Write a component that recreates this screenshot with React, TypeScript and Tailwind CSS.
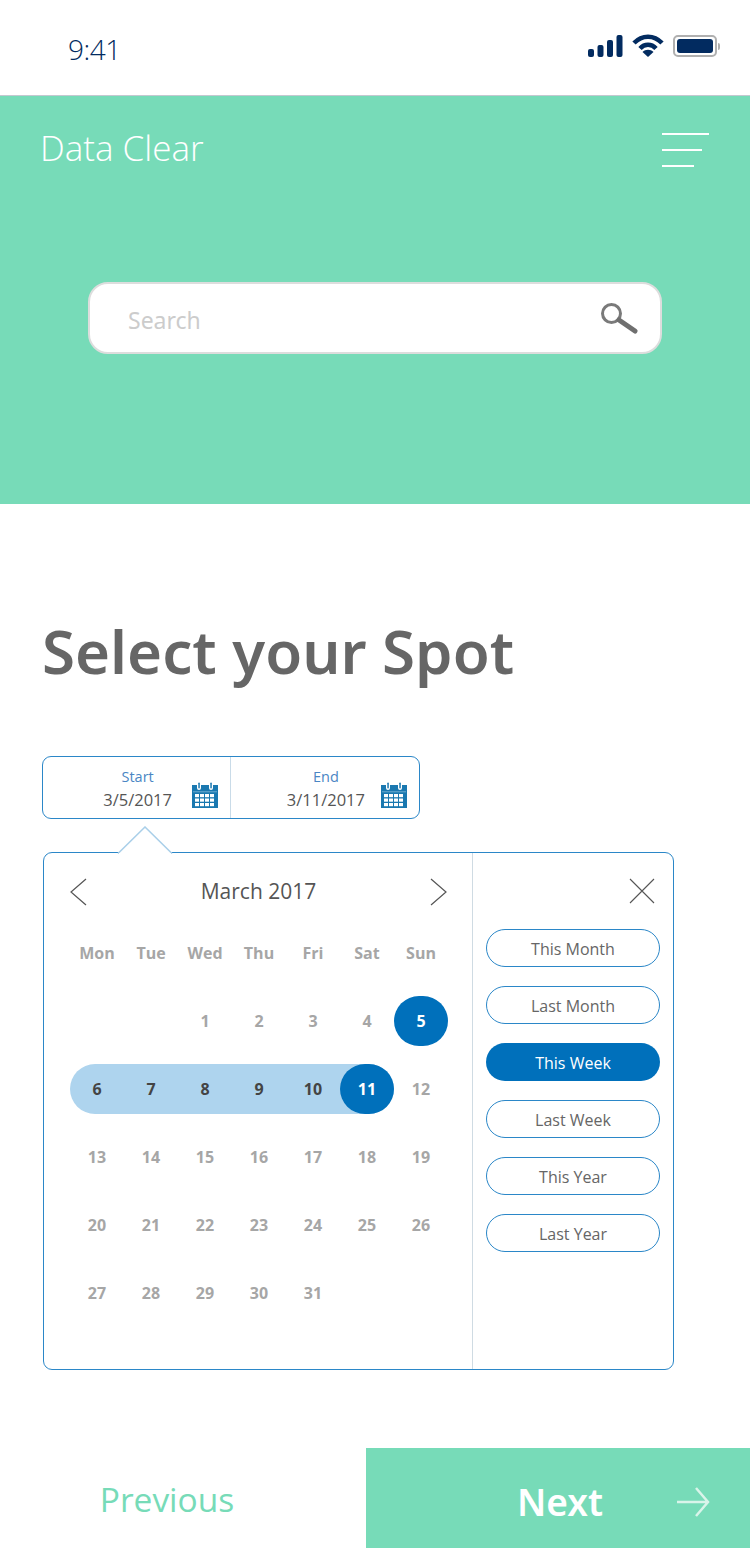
import React from "react";

const weekDays = ["Mon", "Tue", "Wed", "Thu", "Fri", "Sat", "Sun"];
const ranges = ["This Month", "Last Month", "This Week", "Last Week", "This Year", "Last Year"];
const days: (number | null)[] = [
  null, null, 1, 2, 3, 4, 5,
  6, 7, 8, 9, 10, 11, 12,
  13, 14, 15, 16, 17, 18, 19,
  20, 21, 22, 23, 24, 25, 26,
  27, 28, 29, 30, 31, null, null,
];

function CalendarIcon() {
  return (
    <svg width="26" height="26" viewBox="0 0 26 26" className="shrink-0">
      <rect x="0" y="3" width="26" height="23" fill="#1a78b0" />
      <rect x="5" y="0" width="4" height="8" rx="2" fill="#fff" />
      <rect x="17" y="0" width="4" height="8" rx="2" fill="#fff" />
      <rect x="6.300" y="0.500" width="1.500" height="6" rx="0.700" fill="#1a78b0" />
      <rect x="18.300" y="0.500" width="1.500" height="6" rx="0.700" fill="#1a78b0" />
      <rect x="1" y="9.500" width="24" height="0.700" fill="#8fc0dd" />
      {[12, 16.500, 21].map((y) =>
        [3, 8, 13, 18].map((x) => (
          <rect key={`${x}-${y}`} x={x} y={y} width="4" height="3.200" fill="#fff" />
        ))
      )}
    </svg>
  );
}

function DayCell({ day }: { day: number | null }) {
  if (day === null) return <div className="h-[68px]" />;
  if (day === 5) {
    return (
      <div className="h-[68px] flex items-center">
        <div className="w-[54px] h-[50px] rounded-full bg-[#0070bb] text-white flex items-center justify-center">5</div>
      </div>
    );
  }
  if (day >= 6 && day <= 11) {
    return (
      <div className="h-[68px] flex items-center">
        <div className={`w-full h-[50px] bg-[#aed4ee] flex items-center justify-center text-[#444444] ${day === 6 ? "rounded-l-full" : ""} ${day === 11 ? "rounded-r-full" : ""}`}>
          {day === 11 ? (
            <div className="w-full h-full rounded-full bg-[#0070bb] text-white flex items-center justify-center">11</div>
          ) : (
            day
          )}
        </div>
      </div>
    );
  }
  return <div className="h-[68px] flex items-center justify-center text-[#a6a6a6]">{day}</div>;
}

export default function App() {
  return (
    <div className="w-[750px] h-[1550px] bg-white font-['Noto_Sans',sans-serif] overflow-hidden">
      {/* status bar */}
      <div className="h-[96px] border-b border-[#c4c8d0] flex justify-between pl-[68px] pr-[30px]">
        <span className="mt-[31px] text-[28px] leading-[36px] tracking-[-0.5px] text-[#022b60] font-['Open_Sans',sans-serif] font-light">9:41</span>
        <div className="mt-[34px] flex items-start gap-[9px]">
          <svg width="35" height="23" viewBox="0 0 35 23" className="text-[#022b60]">
            <rect x="0" y="15" width="6" height="8" rx="2" fill="currentColor" />
            <rect x="9.500" y="11" width="6" height="12" rx="2" fill="currentColor" />
            <rect x="19" y="6" width="6" height="17" rx="2" fill="currentColor" />
            <rect x="28.500" y="1" width="6" height="22" rx="2" fill="currentColor" />
          </svg>
          <svg width="32" height="23" viewBox="0 0 32 23">
            <path d="M2 9C10 0.500 22 0.500 30 9" fill="none" stroke="#022b60" strokeWidth="4.500" />
            <path d="M8 14.500C12.500 9.500 19.500 9.500 24 14.500" fill="none" stroke="#022b60" strokeWidth="4.500" />
            <path d="M10.500 18C13.500 15 18.500 15 21.500 18L16 23z" fill="#022b60" />
          </svg>
          <div className="flex items-center mt-[1px] gap-[1px]">
            <div className="w-[44px] h-[22px] rounded-[5px] border-2 border-[#b0b0b0] p-[2px]">
              <div className="w-full h-full rounded-[3px] bg-[#022b60]" />
            </div>
            <div className="w-[2px] h-[7px] rounded-r bg-[#b0b0b0]" />
          </div>
        </div>
      </div>

      {/* header */}
      <div className="h-[408px] bg-[#77dbb8] px-[40px]">
        <div className="pt-[35px] flex justify-between items-start">
          <span className="text-[35px] leading-[34px] text-white font-['Open_Sans',sans-serif] font-light">Data Clear</span>
          <div className="flex flex-col gap-[14px] w-[47px] mt-[2px] mr-[1px]">
            <div className="h-[2px] w-[47px] bg-white" />
            <div className="h-[2px] w-[40px] bg-white" />
            <div className="h-[2px] w-[32px] bg-white" />
          </div>
        </div>
        <div className="mt-[115px] mx-[48px] h-[72px] rounded-[20px] bg-white border-2 border-[#dddddd] flex items-center justify-between pl-[38px] pr-[22px]">
          <span className="text-[23px] text-[#cccccc] mt-[4px]">Search</span>
          <svg width="38" height="32" viewBox="0 0 38 32">
            <circle cx="11.500" cy="11.500" r="9" fill="none" stroke="#7a7a7a" strokeWidth="3" />
            <path d="M19 18l16 11" stroke="#6f6f6f" strokeWidth="5" strokeLinecap="round" />
          </svg>
        </div>
      </div>

      <div className="pl-[42px] font-['Open_Sans',sans-serif]">
        <h1 className="mt-[104px] text-[60px] leading-[87px] font-semibold text-[#666666] font-['Noto_Sans',sans-serif]">Select your Spot</h1>

        {/* date range */}
        <div className="mt-[61px] w-[378px] h-[63px] rounded-[9px] border border-[#2b87c8] flex">
          <div className="w-[188px] border-r border-[#c9dbe8] flex items-center justify-end pr-[12px] gap-[20px]">
            <div className="flex flex-col items-center mt-[5px]">
              <span className="text-[14.500px] leading-[20px] text-[#4a86c4]">Start</span>
              <span className="text-[16.500px] leading-[26px] text-[#555555]">3/5/2017</span>
            </div>
            <div className="mt-[15px] flex"><CalendarIcon /></div>
          </div>
          <div className="flex-1 flex items-center justify-end pr-[12px] gap-[16px]">
            <div className="flex flex-col items-center mt-[5px]">
              <span className="text-[14.500px] leading-[20px] text-[#4a86c4]">End</span>
              <span className="text-[16.500px] leading-[26px] text-[#555555]">3/11/2017</span>
            </div>
            <div className="mt-[15px] flex"><CalendarIcon /></div>
          </div>
        </div>

        {/* calendar popover */}
        <div className="relative mt-[33px] ml-[1px] w-[631px] h-[518px] rounded-[9px] border border-[#2b87c8] flex">
          <svg width="56" height="28" viewBox="0 0 56 28" className="absolute left-[73px] top-[-27px]">
            <path d="M1 27.500L28 1l27 26.500" fill="#fff" stroke="#a9cfe9" strokeWidth="1.500" />
            <rect x="2" y="27" width="52" height="1" fill="#fff" />
          </svg>

          <div className="w-[429px] h-full border-r border-[#cfdbe3] pl-[26px]">
            <div className="h-[78px] w-[379px] -ml-[1px] flex items-center justify-between">
              <svg width="18" height="28" viewBox="0 0 18 28" className="text-[#555555]">
                <path d="M17 1L2 14l15 13" fill="none" stroke="currentColor" strokeWidth="1.200" />
              </svg>
              <span className="text-[21px] text-[#555555]">March 2017</span>
              <svg width="18" height="28" viewBox="0 0 18 28" className="text-[#555555]">
                <path d="M1 1l15 13L1 27" fill="none" stroke="currentColor" strokeWidth="1.200" />
              </svg>
            </div>
            <div className="grid grid-cols-[repeat(7,54px)] text-[16px] font-bold font-['Open_Sans',sans-serif] leading-[24px]">
              {weekDays.map((d) => (
                <div key={d} className="h-[44px] flex items-center justify-center text-[#a6a6a6]">{d}</div>
              ))}
              <div className="col-span-7 h-[12px]" />
              {days.map((day, i) => (
                <DayCell key={i} day={day} />
              ))}
            </div>
          </div>

          <div className="flex-1 flex flex-col pl-[13px]">
            <div className="h-[76px] flex items-center justify-end pr-[18px]">
              <svg width="26" height="26" viewBox="0 0 26 26" className="text-[#555555]">
                <path d="M1 1l24 24M25 1L1 25" fill="none" stroke="currentColor" strokeWidth="1.100" />
              </svg>
            </div>
            <div className="flex flex-col gap-[19px]">
              {ranges.map((r) => (
                <div
                  key={r}
                  className={
                    r === "This Week"
                      ? "w-[174px] h-[38px] pt-[1px] rounded-full bg-[#0070bb] text-white text-[16px] flex items-center justify-center"
                      : "w-[174px] h-[38px] pt-[1px] rounded-full border border-[#2b87c8] text-[#666666] text-[16px] flex items-center justify-center"
                  }
                >
                  {r}
                </div>
              ))}
            </div>
          </div>
        </div>
      </div>

      {/* footer */}
      <div className="mt-[78px] h-[100px] flex">
        <div className="w-[366px] flex items-center justify-center pr-[32px]">
          <span className="text-[33.500px] text-[#77dbb8] font-['Open_Sans',sans-serif] mt-[2px]">Previous</span>
        </div>
        <div className="flex-1 bg-[#77dbb8] flex items-center pl-[151px] pr-[40px] justify-between">
          <span className="text-[37px] font-semibold text-white mt-[8px]">Next</span>
          <svg width="34" height="32" viewBox="0 0 34 32" className="mt-[8px]">
            <path d="M1 16h31M20 2l12 14-12 14" fill="none" stroke="#d9f4ea" strokeWidth="2.500" />
          </svg>
        </div>
      </div>
    </div>
  );
}
